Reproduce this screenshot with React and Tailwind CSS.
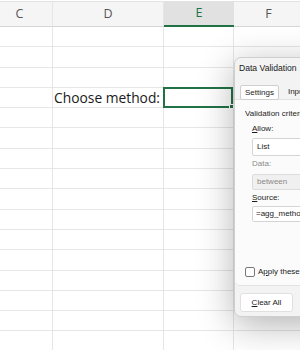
import React from "react";

const font = { fontFamily: '"Open Sans", "Noto Sans", sans-serif' };
const dlgFont = { fontFamily: '"Liberation Sans", Arial, sans-serif' };

const ROWS = 16;

function Row({ i }) {
  const cellBase = "h-full border-r border-[#e6e6e6]";
  const isLabel = i === 3;
  return (
    <div className="grid grid-cols-[66px_111px_70px_70px] h-[20.3px] border-b border-[#e6e6e6]">
      <div className={cellBase}></div>
      <div className={`${cellBase} flex items-center justify-end pr-[3px]`}>
        {isLabel && (
          <span className="text-[13.8px] leading-none text-[#1a1a1a] whitespace-nowrap pt-[1px]">Choose method:</span>
        )}
      </div>
      <div className={`${cellBase} relative`}>
        {isLabel && (
          <div className="absolute -left-[1px] -top-[1px] right-0 -bottom-[1px] border-2 border-[#217346]">
            <div className="absolute -right-[3px] -bottom-[3px] w-[5px] h-[5px] bg-[#217346] border border-white"></div>
          </div>
        )}
      </div>
      <div className={cellBase}></div>
    </div>
  );
}

export default function App() {
  return (
    <div className="w-[300px] h-[350px] overflow-hidden bg-white relative" style={font}>
      <div className="-ml-[13px]">
        <div className="h-[2px] bg-white border-b border-[#e3e3e3]"></div>
        <div className="grid grid-cols-[66px_111px_70px_70px] h-[25px] bg-[#f5f5f5] border-b border-[#d6d6d6] text-[12.5px] text-[#555]">
          <div className="flex items-center justify-center border-r border-[#e6e6e6]">C</div>
          <div className="flex items-center justify-center border-r border-[#e6e6e6]">D</div>
          <div className="flex items-center justify-center bg-[#e1e1e1] text-[#217346] border-b-2 border-[#217346] -mb-[1px]">E</div>
          <div className="flex items-center justify-center border-r border-[#e6e6e6]">F</div>
        </div>
        {Array.from({ length: ROWS }).map((_, i) => (
          <Row key={i} i={i} />
        ))}
      </div>

      {/* Data Validation dialog */}
      <div
        className="absolute left-[234px] top-[57px] w-[200px] h-[260px] rounded-[7px] bg-[#f3f3f3] border border-[#cfcfcf] shadow-[0_8px_36px_rgba(0,0,0,0.3)] overflow-hidden text-[8px] text-[#1c1c1c] flex flex-col"
        style={dlgFont}
      >
        <div className="h-[20px] flex items-center pl-[4px] text-[8.6px] leading-none text-[#1a1a1a] whitespace-nowrap">Data Validation</div>
        <div className="h-[21px] flex items-end pl-[5px] gap-[9px]">
          <div className="h-[15px] px-[4px] flex items-center bg-white border border-[#cfcfcf] rounded-[2px] -mb-[1px] relative z-10">Settings</div>
          <div className="h-[15px] flex items-center whitespace-nowrap">Input Message</div>
        </div>
        <div className="h-[187px] bg-[#fbfbfb] border-t border-b border-[#e2e2e2] rounded-b-[5px] flex flex-col pl-[10px]">
          <div className="h-[14px] mt-[7px] flex items-center whitespace-nowrap">Validation criteria</div>
          <div className="pl-[7px] flex flex-col">
            <div className="h-[14px] mt-[1px] flex items-center"><span><span className="underline">A</span>llow:</span></div>
            <div className="h-[18px] mt-[2px] bg-white border border-[#d5d5d5] rounded-[2px] flex items-center pl-[4px]">List</div>
            <div className="h-[14px] mt-[1px] flex items-center text-[#8a8a8a]">Data:</div>
            <div className="h-[16px] mt-[3px] bg-[#f0f0f0] border border-[#dcdcdc] rounded-[2px] flex items-center pl-[4px] text-[#8a8a8a]">between</div>
            <div className="h-[13px] mt-[1px] flex items-center"><span><span className="underline">S</span>ource:</span></div>
            <div className="h-[16px] mt-[2px] bg-white border border-[#d5d5d5] rounded-[2px] flex items-center pl-[3px] whitespace-nowrap">=agg_methods</div>
          </div>
          <div className="h-[12px] mt-[44px] flex items-center gap-[3px]">
            <div className="w-[10px] h-[10px] rounded-[2px] border border-[#777] bg-white"></div>
            <span className="whitespace-nowrap">A<span className="underline">p</span>ply these changes</span>
          </div>
        </div>
        <div className="pl-[5px] mt-[7px]">
          <div className="w-[53px] h-[19px] bg-white border border-[#e0e0e0] rounded-[3px] flex items-center justify-center">
            <span><span className="underline">C</span>lear All</span>
          </div>
        </div>
      </div>
    </div>
  );
}
